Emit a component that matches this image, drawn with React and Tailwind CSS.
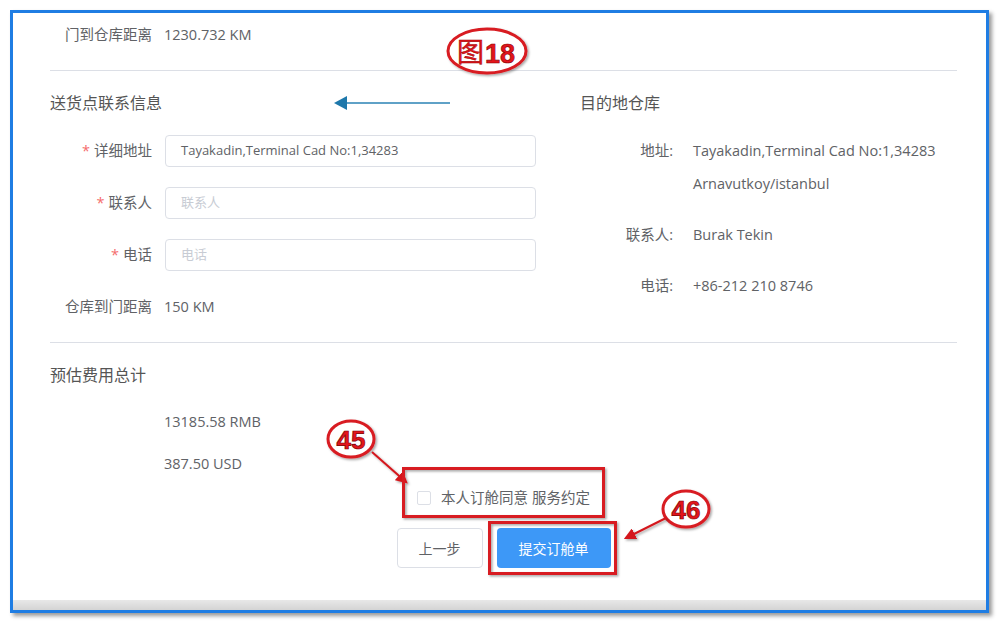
import React from 'react';

const FONT = { fontFamily: '"Open Sans", "Noto Sans CJK SC", sans-serif' };

const Label = ({ required, children }) => (
  <div className="w-[102px] shrink-0 text-right text-[14.5px] text-[#606266]">
    {required && <span className="mr-[4px] text-[#f56c6c]">*</span>}
    {children}
  </div>
);

const Input = ({ value, placeholder }) => (
  <div className="ml-[13px] flex h-[32px] w-[371px] items-center rounded-[4px] border border-[#dcdfe6] bg-white px-[15px] text-[13px]">
    {value ? (
      <span className="text-[#606266]">{value}</span>
    ) : (
      <span className="text-[#c8ccd4]">{placeholder}</span>
    )}
  </div>
);

const InfoRow = ({ label, children, className = '' }) => (
  <div className={'flex leading-[33px] ' + className}>
    <div className="w-[93px] shrink-0 text-right text-[14.5px] text-[#606266]">{label}</div>
    <div className="ml-[20px] text-[14.5px] text-[#606266]">{children}</div>
  </div>
);

// red annotation marks drawn on top of the page
const Marks = () => (
  <svg className="pointer-events-none absolute left-0 top-0" width="1000" height="624" viewBox="0 0 1000 624">
    <defs>
      <marker id="redHead" viewBox="0 0 10 10" refX="8" refY="5" markerWidth="6" markerHeight="6" orient="auto">
        <path d="M0 0 L10 5 L0 10 Z" fill="#d4161c" />
      </marker>
      <filter id="sh" x="-20%" y="-20%" width="140%" height="140%">
        <feDropShadow dx="1.5" dy="1.5" stdDeviation="1" floodColor="#000" floodOpacity="0.35" />
      </filter>
    </defs>

    {/* blue arrow */}
    <line x1="345" y1="103" x2="450" y2="103" stroke="#2a82b4" strokeWidth="1.6" />
    <path d="M334 103 L347 96 L347 110 Z" fill="#1e78ab" />

    {/* 图18 */}
    <g filter="url(#sh)">
      <ellipse cx="487" cy="51" rx="39" ry="22" fill="#fff" stroke="#d81a20" strokeWidth="3" />
    </g>
    <text x="457" y="62" fontSize="27" fill="#e3151c" stroke="#9a0000" strokeWidth="0.5" fontFamily='"Noto Sans CJK SC", sans-serif'>图</text>
    <text x="485" y="63" fontSize="27" fontWeight="bold" fill="#e3151c" stroke="#8a0000" strokeWidth="0.6" fontFamily='"Liberation Sans", sans-serif'>18</text>

    {/* 45 */}
    <g filter="url(#sh)">
      <ellipse cx="351" cy="439" rx="23" ry="18" fill="#fff" stroke="#d81a20" strokeWidth="3" />
    </g>
    <text x="351" y="449" textAnchor="middle" fontSize="26" fontWeight="bold" fill="#e3151c" stroke="#7a0000" strokeWidth="0.7" fontFamily='"Liberation Sans", sans-serif'>45</text>
    <g filter="url(#sh)">
      <line x1="372" y1="452" x2="406" y2="482" stroke="#d4161c" strokeWidth="2" markerEnd="url(#redHead)" />
      <rect x="403.5" y="468.5" width="200" height="48" fill="none" stroke="#d81a20" strokeWidth="3" />
    </g>

    {/* 46 */}
    <g filter="url(#sh)">
      <ellipse cx="686" cy="509" rx="23" ry="18" fill="#fff" stroke="#d81a20" strokeWidth="3" />
    </g>
    <text x="686" y="519" textAnchor="middle" fontSize="26" fontWeight="bold" fill="#e3151c" stroke="#7a0000" strokeWidth="0.7" fontFamily='"Liberation Sans", sans-serif'>46</text>
    <g filter="url(#sh)">
      <line x1="666" y1="518" x2="626" y2="538" stroke="#d4161c" strokeWidth="2" markerEnd="url(#redHead)" />
      <rect x="489.5" y="522.5" width="126" height="51" fill="none" stroke="#d81a20" strokeWidth="3" />
    </g>
  </svg>
);

export default function App() {
  return (
    <div className="relative h-[624px] w-[1000px] overflow-hidden bg-white" style={FONT}>
      <div className="ml-[10px] mt-[10px] flex h-[603px] w-[979px] flex-col border-[3px] border-[#1f7de3] bg-white shadow-[3px_3px_4px_rgba(0,0,0,0.4)]">
        {/* door to warehouse */}
        <div className="ml-[37px] mr-[29px] h-[58px] shrink-0 border-b border-[#dcdfe6] pt-[12px]">
          <div className="flex h-[20px] items-center">
            <Label>门到仓库距离</Label>
            <span className="ml-[12px] text-[14.5px] text-[#606266]">1230.732 KM</span>
          </div>
        </div>

        {/* contact info */}
        <div className="ml-[37px] mr-[29px] flex h-[272px] shrink-0 border-b border-[#dcdfe6]">
          <div className="w-[486px] pt-[21px]">
            <div className="h-[22px] text-[16px] leading-[22px] text-[#555]">送货点联系信息</div>
            <div className="mt-[21px] flex items-center">
              <Label required>详细地址</Label>
              <Input value="Tayakadin,Terminal Cad No:1,34283" />
            </div>
            <div className="mt-[20px] flex items-center">
              <Label required>联系人</Label>
              <Input placeholder="联系人" />
            </div>
            <div className="mt-[20px] flex items-center">
              <Label required>电话</Label>
              <Input placeholder="电话" />
            </div>
            <div className="mt-[26px] flex h-[20px] items-center">
              <Label>仓库到门距离</Label>
              <span className="ml-[12px] text-[14.5px] text-[#606266]">150 KM</span>
            </div>
          </div>
          <div className="ml-[44px] pt-[21px]">
            <div className="h-[22px] text-[16px] leading-[22px] text-[#555]">目的地仓库</div>
            <InfoRow label="地址:" className="mt-[20px]">
              <div>Tayakadin,Terminal Cad No:1,34283</div>
              <div>Arnavutkoy/istanbul</div>
            </InfoRow>
            <InfoRow label="联系人:" className="mt-[18px]">Burak Tekin</InfoRow>
            <InfoRow label="电话:" className="mt-[18px]">+86-212 210 8746</InfoRow>
          </div>
        </div>

        {/* cost */}
        <div className="ml-[37px] mr-[29px] h-[257px] shrink-0 pt-[21px]">
          <div className="h-[22px] text-[16px] leading-[22px] text-[#555]">预估费用总计</div>
          <div className="mt-[26px] h-[20px] pl-[114px] text-[14.5px] leading-[20px] text-[#606266]">13185.58 RMB</div>
          <div className="mt-[22px] h-[20px] pl-[114px] text-[14.5px] leading-[20px] text-[#606266]">387.50 USD</div>
          <div className="mt-[14px] flex h-[20px] items-center justify-center">
            <span className="h-[14px] w-[14px] rounded-[2px] border border-[#dcdfe6] bg-white" />
            <span className="ml-[10px] text-[14.5px] text-[#606266]">本人订舱同意 服务约定</span>
          </div>
          <div className="mt-[20px] flex justify-center gap-[14px]">
            <button className="h-[40px] w-[86px] rounded-[4px] border border-[#dcdfe6] bg-white text-[14px] text-[#606266]">上一步</button>
            <button className="h-[40px] w-[114px] rounded-[4px] bg-[#3d98f7] text-[14px] text-white">提交订舱单</button>
          </div>
        </div>

        <div className="h-[10px] shrink-0 bg-gradient-to-b from-[#e8e8e8] to-[#d4d4d4]" />
      </div>
      <Marks />
    </div>
  );
}
